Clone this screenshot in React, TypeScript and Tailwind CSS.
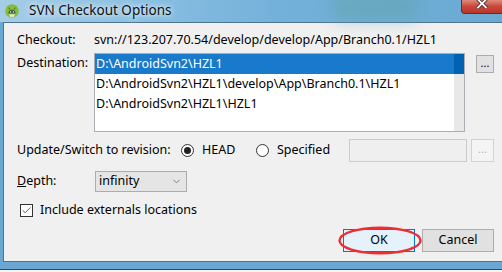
import { Check, ChevronDown } from 'lucide-react';

const FONT = "font-['Noto_Sans','Liberation_Sans',sans-serif]";

function Radio({ checked }: { checked?: boolean }) {
  return (
    <span className="flex h-[13px] w-[13px] shrink-0 items-center justify-center rounded-full border border-[#333] bg-white">
      {checked && <span className="h-[7px] w-[7px] rounded-full bg-[#222]" />}
    </span>
  );
}

function AndroidIcon() {
  return (
    <svg width="14" height="14" viewBox="0 0 14 14">
      <circle cx="7" cy="7" r="6.8" fill="#7fbf3a" />
      <path d="M3.4 9.4 A3.6 3.6 0 0 1 10.6 9.4 Z" fill="#4d5a40" />
      <line x1="4.8" y1="5.6" x2="3.8" y2="3.6" stroke="#4d5a40" strokeWidth="0.9" />
      <line x1="9.2" y1="5.6" x2="10.2" y2="3.6" stroke="#4d5a40" strokeWidth="0.9" />
      <circle cx="5.6" cy="7.9" r="0.6" fill="#fff" />
      <circle cx="8.4" cy="7.9" r="0.6" fill="#fff" />
      <path d="M4 10.2 L10 10.2 L8.7 13 L5.3 13 Z" fill="#dfe9d2" />
    </svg>
  );
}

export default function App() {
  const rows = [
    'D:\\AndroidSvn2\\HZL1',
    'D:\\AndroidSvn2\\HZL1\\develop\\App\\Branch0.1\\HZL1',
    'D:\\AndroidSvn2\\HZL1\\HZL1',
  ];

  return (
    <div className={`flex h-[272px] w-[502px] flex-col overflow-hidden bg-[#6aa7d2] text-[12.5px] text-black ${FONT}`}>
      {/* Title bar */}
      <div className="relative flex h-[22px] shrink-0 items-center bg-[linear-gradient(90deg,#a6cde6_0%,#8cc0e2_25%,#74b1da_55%,#6aaad2_100%)]">
        <div className="absolute left-[330px] top-[-6px] h-[26px] w-[90px] rounded-full bg-[#5fa3a6] opacity-50 blur-[8px]" />
        <div className="ml-[5px] flex items-center">
          <AndroidIcon />
        </div>
        <div className="relative ml-[6px] rounded-full px-1 text-[13.5px] leading-none text-[#111] [text-shadow:0_0_8px_#e6f3fb,0_0_4px_#e6f3fb]">
          SVN Checkout Options
        </div>
        <div className="absolute right-[-10px] top-0 flex h-[14px] w-[51px] items-start justify-center rounded-bl-[4px] border border-t-0 border-[#6b2a25] bg-[linear-gradient(180deg,#e08a7c_0%,#c8473a_50%,#b8372b_100%)]">
          <svg width="12" height="9" viewBox="0 0 12 9" className="ml-[-10px]">
            <path d="M1.5 -1 L10.5 8 M10.5 -1 L1.5 8" stroke="#3a2020" strokeWidth="3.4" />
            <path d="M1.5 -1 L10.5 8 M10.5 -1 L1.5 8" stroke="#fff" strokeWidth="1.8" />
          </svg>
        </div>
      </div>

      {/* Window body */}
      <div className="flex flex-1 pl-[3px]">
        <div className="flex flex-1 flex-col border-l border-t border-b border-[#4f7392] bg-[#f0f0f0] pl-[13px] pr-[8px] pt-[9px]">
          {/* Checkout */}
          <div className="flex h-[16px] items-center">
            <div className="w-[77px]">Checkout:</div>
            <div>svn://123.207.70.54/develop/develop/App/Branch0.1/HZL1</div>
          </div>

          {/* Destination */}
          <div className="mt-[5px] flex">
            <div className="w-[77px] leading-[20px]">Destination:</div>
            <div className="flex h-[79px] w-[371px] border border-[#abadb3] bg-white">
              <div className="flex-1">
                {rows.map((r, i) => (
                  <div
                    key={r}
                    className={`h-[20px] pl-[1px] leading-[20px] ${i === 0 ? 'bg-[#1979ca] text-white' : ''}`}
                  >
                    {r}
                  </div>
                ))}
              </div>
              <div className="w-[10px] bg-[#e8e8e8]">
                <div className="h-[20px] bg-[#0063b1]" />
              </div>
            </div>
            <button className="ml-[11px] mt-[2px] flex h-[18px] w-[18px] items-center justify-center border border-[#adadad] bg-[#e1e1e1] pb-[4px] text-[11px] leading-none">
              ...
            </button>
          </div>

          {/* Revision */}
          <div className="mt-[7px] flex h-[23px] items-center">
            <div className="w-[164px]">Update/Switch to revision:</div>
            <div className="flex w-[75px] items-center gap-[8px]">
              <Radio checked />
              <span>HEAD</span>
            </div>
            <div className="flex w-[93px] items-center gap-[8px]">
              <Radio />
              <span>Specified</span>
            </div>
            <div className="h-[23px] w-[118px] border border-[#cccccc] bg-[#efefef]" />
            <button className="ml-[4px] flex h-[23px] w-[23px] items-center justify-center border border-[#d2d2d2] bg-[#f4f4f4] pb-[4px] text-[11px] leading-none text-[#b5b5b5]">
              ...
            </button>
          </div>

          {/* Depth */}
          <div className="mt-[9px] flex h-[21px] items-center">
            <div className="w-[78px]">
              <span className="underline">D</span>epth:
            </div>
            <div className="flex h-[21px] w-[92px] items-center justify-between border border-[#acacac] bg-[#e5e5e5] pl-[3px] pr-[4px]">
              <span>infinity</span>
              <ChevronDown size={11} strokeWidth={1.5} className="text-[#555]" />
            </div>
          </div>

          {/* Externals */}
          <div className="mt-[10px] flex h-[16px] items-center">
            <span className="ml-[3px] flex h-[13px] w-[13px] items-center justify-center border border-[#333] bg-white">
              <Check size={11} strokeWidth={1.6} className="text-[#222]" />
            </span>
            <span className="ml-[7px]">Include externals locations</span>
          </div>

          {/* Buttons */}
          <div className="mt-[11px] flex justify-end gap-[7px]">
            <div className="relative">
              <button className="flex h-[23px] w-[72px] items-center justify-center border border-[#0078d7] bg-[#e5f1fb]">
                OK
              </button>
              <svg
                className="pointer-events-none absolute left-[-5px] top-[-3px]"
                width="84"
                height="29"
                viewBox="0 0 84 29"
              >
                <ellipse cx="42" cy="14.5" rx="40.5" ry="12.8" fill="none" stroke="#ec2f33" strokeWidth="2.4" />
              </svg>
            </div>
            <button className="flex h-[23px] w-[72px] items-center justify-center border border-[#adadad] bg-[#e1e1e1]">
              Cancel
            </button>
          </div>
        </div>
      </div>

      {/* Bottom frame */}
      <div className="h-[8px] shrink-0 border-b border-[#2f4b63] bg-[#6aa7d2]" />
      <div className="h-[2px] shrink-0 bg-[#f4f4f4]" />
    </div>
  );
}
